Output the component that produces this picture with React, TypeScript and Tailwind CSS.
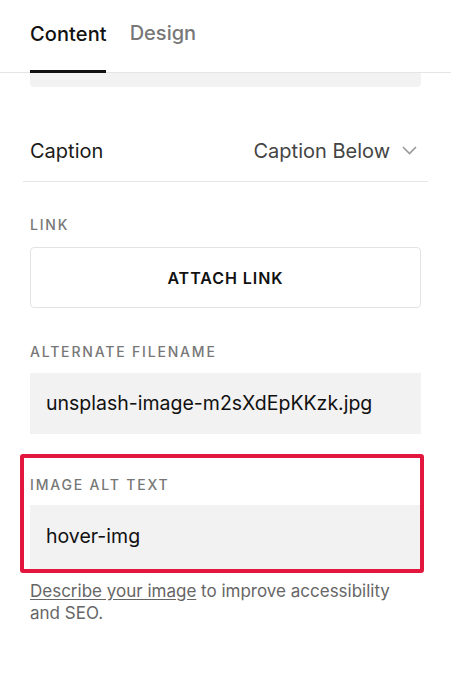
import React from "react";

export default function App() {
  const font = { fontFamily: "Inter, 'Liberation Sans', sans-serif" };
  return (
    <div className="w-[451px] h-[700px] bg-white relative overflow-hidden" style={font}>
      {/* Tabs */}
      <div className="h-[73px] border-b border-[#e5e5e5] flex items-end pl-[30px] gap-[23px]">
        <div className="flex flex-col items-center">
          <span className="text-[20px] font-medium text-[#111] leading-none mb-[26px] tracking-[0.005em]">Content</span>
          <div className="h-[3px] w-[76px] bg-[#111] -mb-px" />
        </div>
        <div className="flex flex-col">
          <span className="text-[20px] font-medium text-[#777] leading-none mb-[29px]">Design</span>
        </div>
      </div>
      <div className="mx-[30px] h-[14px] bg-[#f2f2f2] rounded-b-[4px]" />

      {/* Caption row */}
      <div className="mx-[23px] h-[95px] border-b border-[#e6e6e6] flex items-center justify-between pl-[7px] pr-[11px] pt-[33px]">
        <span className="text-[20px] text-[#1a1a1a]">Caption</span>
        <div className="flex items-center gap-[12px]">
          <span className="text-[20px] text-[#444]">Caption Below</span>
          <svg width="15" height="9" viewBox="0 0 15 9" fill="none">
            <path d="M1 1l6.5 6.5L14 1" stroke="#999" strokeWidth="1.6" />
          </svg>
        </div>
      </div>

      {/* Link */}
      <div className="px-[30px] pt-[36px]">
        <div className="text-[14px] tracking-[0.13em] text-[#777] font-medium leading-none">LINK</div>
        <div className="mt-[15px] h-[61px] border border-[#e3e3e3] rounded-[4px] flex items-center justify-center">
          <span className="text-[16px] font-semibold tracking-[0.06em] text-[#111]">ATTACH LINK</span>
        </div>

        <div className="mt-[37px] text-[14px] tracking-[0.13em] text-[#777] font-medium leading-none">ALTERNATE FILENAME</div>
        <div className="mt-[14px] h-[61px] bg-[#f2f2f2] flex items-center pl-[16px]">
          <span className="text-[19.5px] text-[#111]">unsplash-image-m2sXdEpKKzk.jpg</span>
        </div>
      </div>

      {/* Alt text highlighted */}
      <div className="ml-[20px] mr-[27px] mt-[20px] border-[4px] border-[#e3173e] rounded-[3px] pl-[6px] pr-0 pb-0">
        <div className="pt-[20px] text-[14px] tracking-[0.13em] text-[#777] font-medium leading-none">IMAGE ALT TEXT</div>
        <div className="mt-[13px] h-[64px] bg-[#f2f2f2] flex items-center pl-[16px]">
          <span className="text-[19.5px] text-[#111]">hover-img</span>
        </div>
      </div>

      <p className="mx-[30px] mt-[7px] text-[17px] leading-[22px] text-[#666]">
        <span className="underline underline-offset-2">Describe your image</span> to improve accessibility and SEO.
      </p>
    </div>
  );
}
